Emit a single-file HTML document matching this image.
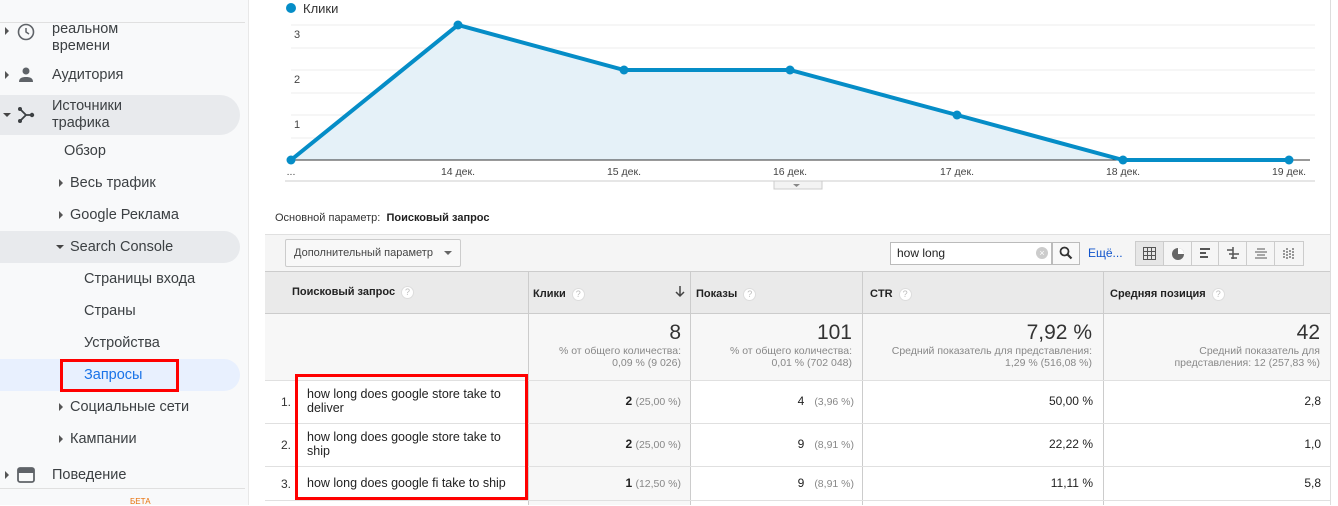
<!DOCTYPE html>
<html><head><meta charset="utf-8"><style>
*{margin:0;padding:0;box-sizing:border-box}
body{width:1338px;height:505px;overflow:hidden;background:#fff;font-family:"Liberation Sans",Arial,sans-serif;position:relative;color:#333}
.sb{position:absolute;left:0;top:0;width:249px;height:505px;background:#f8f9fa;border-right:1px solid #e8e8e8}
.sb .it{position:absolute;font-size:14.5px;color:#3c4043;line-height:17px}
.pill{position:absolute;left:0;width:240px;background:#e8eaed;border-radius:0 20px 20px 0}
.tri{position:absolute;width:0;height:0}
.tr{border-top:4px solid transparent;border-bottom:4px solid transparent;border-left:4px solid #555}
.td{border-left:4px solid transparent;border-right:4px solid transparent;border-top:4px solid #444}
.abs{position:absolute}
.hdr{position:absolute;top:271px;height:43px;background:#eaeaea;border-top:1px solid #ccc;border-bottom:1px solid #ccc;font-size:11px;font-weight:bold;color:#222;line-height:43px}
.q{display:inline-block;width:13px;height:13px;border-radius:50%;background:#fff;border:1px solid #ddd;color:#bbb;font-size:9px;line-height:11px;text-align:center;font-weight:normal;vertical-align:middle;margin-left:6px}
.vl{position:absolute;width:1px;background:#ddd}
.hl{position:absolute;height:1px;background:#e0e0e0;left:265px;width:1065px}
.cell{position:absolute;font-size:12px;color:#222;text-align:right}
.g{color:#888;font-size:10.5px}
.big{font-size:21px;color:#333}
</style></head><body>
<div class="sb">
 <div class="abs" style="left:0;top:22px;width:245px;height:1px;background:#e0e0e0"></div>
 <div class="tri tr" style="left:5px;top:27px"></div>
 <svg class="abs" style="left:16px;top:22px" width="20" height="20"><circle cx="10" cy="10" r="7.5" fill="none" stroke="#5f6368" stroke-width="1.6"/><path d="M10 6v4l3 2" stroke="#5f6368" stroke-width="1.5" fill="none"/></svg>
 <div class="it" style="left:52px;top:21px">реальном<br>времени</div>
 <div class="tri tr" style="left:5px;top:71px"></div>
 <svg class="abs" style="left:17px;top:66px" width="18" height="18"><circle cx="9" cy="5" r="3.5" fill="#5f6368"/><path d="M2 16c0-4 3-5 7-5s7 1 7 5z" fill="#5f6368"/></svg>
 <div class="it" style="left:52px;top:67px">Аудитория</div>
 <div class="pill" style="top:95px;height:40px"></div>
 <div class="tri td" style="left:3px;top:113px"></div>
 <svg class="abs" style="left:17px;top:106px" width="18" height="18"><path d="M3 3l6 6M3 15l6-6h7" stroke="#3c4043" stroke-width="1.8" fill="none"/><circle cx="3" cy="3" r="2" fill="#3c4043"/><circle cx="3" cy="15" r="2" fill="#3c4043"/><circle cx="15" cy="9" r="2.2" fill="#3c4043"/></svg>
 <div class="it" style="left:52px;top:98px">Источники<br>трафика</div>
 <div class="it" style="left:64px;top:143px">Обзор</div>
 <div class="tri tr" style="left:59px;top:179px"></div>
 <div class="it" style="left:70px;top:175px">Весь трафик</div>
 <div class="tri tr" style="left:59px;top:211px"></div>
 <div class="it" style="left:70px;top:207px">Google Реклама</div>
 <div class="pill" style="top:231px;height:32px"></div>
 <div class="tri td" style="left:56px;top:245px"></div>
 <div class="it" style="left:70px;top:239px">Search Console</div>
 <div class="it" style="left:84px;top:271px">Страницы входа</div>
 <div class="it" style="left:84px;top:303px">Страны</div>
 <div class="it" style="left:84px;top:335px">Устройства</div>
 <div class="pill" style="top:359px;height:32px;background:#e8f0fe"></div>
 <div class="it" style="left:84px;top:367px;color:#1a73e8">Запросы</div>
 <div class="abs" style="left:60px;top:359px;width:119px;height:33px;border:3px solid #f00"></div>
 <div class="tri tr" style="left:59px;top:403px"></div>
 <div class="it" style="left:70px;top:399px">Социальные сети</div>
 <div class="tri tr" style="left:59px;top:435px"></div>
 <div class="it" style="left:70px;top:431px">Кампании</div>
 <div class="tri tr" style="left:5px;top:471px"></div>
 <svg class="abs" style="left:17px;top:467px" width="18" height="16"><rect x="1" y="1" width="16" height="14" rx="2" fill="none" stroke="#5f6368" stroke-width="1.8"/><rect x="1" y="1" width="16" height="5" fill="#5f6368"/></svg>
 <div class="it" style="left:52px;top:467px">Поведение</div>
 <div class="abs" style="left:0;top:488px;width:245px;height:1px;background:#e0e0e0"></div>
 <div class="abs" style="left:130px;top:497px;font-size:8px;color:#e8710a">БЕТА</div>
</div>

<svg class="abs" style="left:265px;top:0" width="1073" height="200">
 <circle cx="26" cy="8" r="5" fill="#058dc7"/>
 <text x="38" y="13" font-size="13" fill="#333" font-family="Liberation Sans">Клики</text>
 <g stroke="#eee" stroke-width="1"><line x1="26" x2="1050" y1="25" y2="25"/><line x1="26" x2="1050" y1="48" y2="48"/><line x1="26" x2="1050" y1="70" y2="70"/><line x1="26" x2="1050" y1="93" y2="93"/><line x1="26" x2="1050" y1="115" y2="115"/><line x1="26" x2="1050" y1="138" y2="138"/></g>
 <g font-size="11" fill="#444" font-family="Liberation Sans"><text x="29" y="38">3</text><text x="29" y="83">2</text><text x="29" y="128">1</text></g>
 <path d="M26 160L193 25L359 70L525 70L692 115L858 160L1024 160V160H26Z" fill="#e5f1f8"/>
 <line x1="26" x2="1045" y1="160" y2="160" stroke="#333" stroke-width="1"/>
 <path d="M26 160L193 25L359 70L525 70L692 115L858 160L1024 160" fill="none" stroke="#058dc7" stroke-width="4"/>
 <g fill="#058dc7"><circle cx="26" cy="160" r="4.5"/><circle cx="193" cy="25" r="4.5"/><circle cx="359" cy="70" r="4.5"/><circle cx="525" cy="70" r="4.5"/><circle cx="692" cy="115" r="4.5"/><circle cx="858" cy="160" r="4.5"/><circle cx="1024" cy="160" r="4.5"/></g>
 <g font-size="10.5" fill="#444" font-family="Liberation Sans" text-anchor="middle"><text x="26" y="175">...</text><text x="193" y="175">14 дек.</text><text x="359" y="175">15 дек.</text><text x="525" y="175">16 дек.</text><text x="692" y="175">17 дек.</text><text x="858" y="175">18 дек.</text><text x="1024" y="175">19 дек.</text></g>
 <line x1="20" x2="1050" y1="181" y2="181" stroke="#ccc"/>
 <rect x="509" y="181" width="48" height="8" fill="#f3f3f3" stroke="#ccc"/>
 <path d="M528 184h7l-3.5 3z" fill="#888"/>
</svg>

<div class="abs" style="left:275px;top:212px;font-size:11px;color:#333">Основной параметр:&nbsp; <b style="color:#222">Поисковый запрос</b></div>
<div class="abs" style="left:265px;top:234px;width:1065px;height:38px;background:#f5f5f5;border-top:1px solid #e0e0e0"></div>
<div class="abs" style="left:285px;top:239px;width:176px;height:28px;border:1px solid #ccc;border-radius:2px;background:#f8f8f8;font-size:11px;color:#444;line-height:26px;padding-left:8px">Дополнительный параметр</div>
<div class="tri td" style="left:444px;top:251px;border-top-color:#666"></div>
<div class="abs" style="left:890px;top:242px;width:162px;height:23px;border:1px solid #bbb;background:#fff;font-size:12px;color:#222;line-height:21px;padding-left:6px">how long</div>
<div class="abs" style="left:1036px;top:247px;width:12px;height:12px;border-radius:50%;background:#ccc;color:#fff;font-size:9px;line-height:12px;text-align:center">×</div>
<div class="abs" style="left:1052px;top:242px;width:28px;height:23px;border:1px solid #bbb;background:#f8f8f8"></div>
<svg class="abs" style="left:1059px;top:246px" width="14" height="14"><circle cx="5.5" cy="5.5" r="4" fill="none" stroke="#333" stroke-width="1.8"/><path d="M8.5 8.5l4 4" stroke="#333" stroke-width="2.2"/></svg>
<div class="abs" style="left:1088px;top:246px;font-size:12px;color:#15c">Ещё...</div>
<div class="abs" style="left:1135px;top:241px;width:169px;height:25px;border:1px solid #ccc;background:#f5f5f5;display:flex">
 <div style="width:28px;border-right:1px solid #ccc;background:#e6e6e6;position:relative"><svg style="position:absolute;left:7px;top:5px" width="13" height="13"><path d="M.5 .5h12v12h-12zM4.5 .5v12M8.5 .5v12M.5 4.5h12M.5 8.5h12" stroke="#555" fill="none"/></svg></div>
 <div style="width:28px;border-right:1px solid #ccc;position:relative"><svg style="position:absolute;left:8px;top:6px" width="12" height="12"><circle cx="6" cy="6" r="6" fill="#666"/><path d="M6 6V0A6 6 0 0 1 12 6z" fill="#fff"/></svg></div>
 <div style="width:28px;border-right:1px solid #ccc;position:relative"><svg style="position:absolute;left:8px;top:6px" width="12" height="12"><path d="M0 1h10M0 5h6M0 9h8" stroke="#555" stroke-width="2"/></svg></div>
 <div style="width:28px;border-right:1px solid #ccc;position:relative"><svg style="position:absolute;left:8px;top:5px" width="12" height="13"><path d="M0 3h6M6 0v12M2 7h10M4 11h6" stroke="#555" stroke-width="1.5"/></svg></div>
 <div style="width:28px;border-right:1px solid #ccc;position:relative"><svg style="position:absolute;left:8px;top:5px" width="12" height="13"><path d="M2 2h8M0 5h12M2 8h8M0 11h12" stroke="#777" stroke-width="1.2"/></svg></div>
 <div style="width:28px;position:relative"><svg style="position:absolute;left:8px;top:5px" width="12" height="13"><path d="M1 3v9M4 1v11M7 3v9M10 1v11" stroke="#777" stroke-width="1.5" stroke-dasharray="2 1"/></svg></div>
</div>

<div class="hdr" style="left:265px;width:1065px"></div>
<div class="hdr" style="left:292px;background:none;border:0">Поисковый запрос<span class="q">?</span></div>
<div class="hdr" style="left:533px;background:none;border:0;top:273px">Клики<span class="q">?</span></div>
<svg class="abs" style="left:675px;top:286px" width="10" height="12"><path d="M5 0v10M1 6l4 4 4-4" stroke="#444" stroke-width="1.5" fill="none"/></svg>
<div class="hdr" style="left:696px;background:none;border:0;top:273px">Показы<span class="q">?</span></div>
<div class="hdr" style="left:870px;background:none;border:0;top:273px">CTR<span class="q">?</span></div>
<div class="hdr" style="left:1110px;background:none;border:0;top:273px">Средняя позиция<span class="q">?</span></div>

<div class="abs" style="left:265px;top:314px;width:1065px;height:66px;background:#f7f7f7"></div>
<div class="abs" style="left:528px;top:380px;width:162px;height:125px;background:#f7f7f7"></div>
<div class="vl" style="left:528px;top:271px;height:234px;background:#ccc"></div>
<div class="vl" style="left:690px;top:271px;height:234px;background:#ccc"></div>
<div class="vl" style="left:862px;top:271px;height:234px;background:#ccc"></div>
<div class="vl" style="left:1103px;top:271px;height:234px;background:#ccc"></div>
<div class="vl" style="left:1330px;top:0;height:505px;background:#ddd"></div>
<div class="hl" style="top:380px"></div><div class="hl" style="top:423px"></div><div class="hl" style="top:466px"></div><div class="hl" style="top:500px"></div>

<div class="cell big" style="left:530px;width:151px;top:321px">8</div>
<div class="cell g" style="left:530px;width:151px;top:345px;line-height:12px">% от общего количества:<br>0,09 % (9 026)</div>
<div class="cell big" style="left:692px;width:160px;top:321px">101</div>
<div class="cell g" style="left:692px;width:160px;top:345px;line-height:12px">% от общего количества:<br>0,01 % (702 048)</div>
<div class="cell big" style="left:864px;width:228px;top:321px">7,92 %</div>
<div class="cell g" style="left:864px;width:228px;top:345px;line-height:12px">Средний показатель для представления:<br>1,29 % (516,08 %)</div>
<div class="cell big" style="left:1105px;width:215px;top:321px">42</div>
<div class="cell g" style="left:1105px;width:215px;top:345px;line-height:12px">Средний показатель для<br>представления: 12 (257,83 %)</div>

<div class="abs" style="left:281px;top:395px;font-size:12px">1.</div>
<div class="abs" style="left:281px;top:438px;font-size:12px">2.</div>
<div class="abs" style="left:281px;top:477px;font-size:12px">3.</div>
<div class="abs" style="left:307px;top:387px;font-size:12.5px;line-height:14px;color:#222">how long does google store take to<br>deliver</div>
<div class="abs" style="left:307px;top:430px;font-size:12.5px;line-height:14px;color:#222">how long does google store take to<br>ship</div>
<div class="abs" style="left:307px;top:476px;font-size:12.5px;color:#222">how long does google fi take to ship</div>
<div class="abs" style="left:295px;top:374px;width:233px;height:126px;border:3px solid #f00"></div>

<div class="cell" style="left:530px;width:151px;top:394px"><b>2</b> <span class="g">(25,00 %)</span></div>
<div class="cell" style="left:530px;width:151px;top:437px"><b>2</b> <span class="g">(25,00 %)</span></div>
<div class="cell" style="left:530px;width:151px;top:476px"><b>1</b> <span class="g">(12,50 %)</span></div>
<div class="cell" style="left:692px;width:162px;top:394px">4 &nbsp; <span class="g">(3,96 %)</span></div>
<div class="cell" style="left:692px;width:162px;top:437px">9 &nbsp; <span class="g">(8,91 %)</span></div>
<div class="cell" style="left:692px;width:162px;top:476px">9 &nbsp; <span class="g">(8,91 %)</span></div>
<div class="cell" style="left:864px;width:229px;top:394px">50,00 %</div>
<div class="cell" style="left:864px;width:229px;top:437px">22,22 %</div>
<div class="cell" style="left:864px;width:229px;top:476px">11,11 %</div>
<div class="cell" style="left:1105px;width:216px;top:394px">2,8</div>
<div class="cell" style="left:1105px;width:216px;top:437px">1,0</div>
<div class="cell" style="left:1105px;width:216px;top:476px">5,8</div>
</body></html>
